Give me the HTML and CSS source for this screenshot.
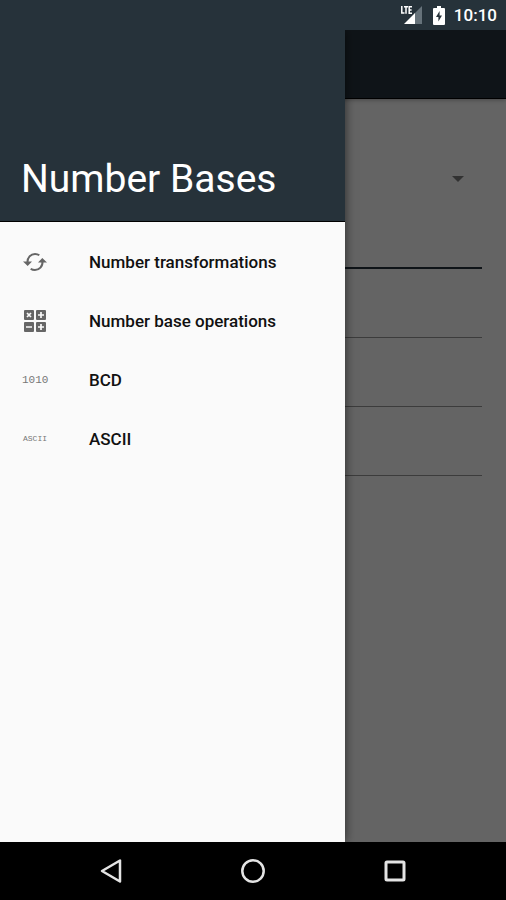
FILE: index.html
```html
<!DOCTYPE html>
<html lang="en">
<head>
<meta charset="utf-8">
<meta name="viewport" content="width=device-width, initial-scale=1">
<title>Number Bases</title>
<link rel="stylesheet" href="styles.css">
</head>
<body>
<div class="screen">
  <header class="status">
    <svg class="signal" width="22" height="20" viewBox="0 0 22 20" aria-hidden="true">
      <path fill="#66727a" d="M22 1v18H14V9z"/>
      <path fill="#fff" d="M15 8v11H4z"/>
      <path fill="none" stroke="#fff" stroke-width="1.5" d="M1.800 1v7h2.700M4 1.800h4M6 1.800v7M12 1.800H9.200v6.400H12M9 5h2.600"/>
    </svg>
    <svg class="battery" width="12" height="19" viewBox="0 0 12 19" aria-hidden="true">
      <path fill="#fff" d="M4 0h4v2h3a1 1 0 0 1 1 1v15a1 1 0 0 1-1 1H1a1 1 0 0 1-1-1V3a1 1 0 0 1 1-1h3z"/>
      <path fill="#26323a" d="M6.600 5v4.600H9L5.400 15.500v-4.500H3z"/>
    </svg>
    <time class="clock">10:10</time>
  </header>

  <div class="stage">
    <main class="page">
      <div class="appbar"></div>
      <form class="form">
        <div class="picker">
          <select class="base" aria-label="Base"><option></option></select>
          <svg class="caret" width="12" height="6" viewBox="0 0 12 6" aria-hidden="true"><path fill="#323232" d="M0 0h12L6 6z"/></svg>
        </div>
        <input class="field field-active" type="text" aria-label="First value">
        <input class="field" type="text" aria-label="Second value">
        <input class="field" type="text" aria-label="Third value">
        <input class="field" type="text" aria-label="Fourth value">
      </form>
    </main>

    <aside class="drawer">
      <div class="drawer-head"><h1 class="title">Number Bases</h1></div>
      <nav class="menu">
        <button class="item" type="button">
          <svg class="icon" width="26" height="24" viewBox="0 0 26 24" aria-hidden="true">
            <g fill="none" stroke="#666" stroke-width="2">
              <path d="M5.500 13C5 7.500 9 4 13 4c1.700 0 3.100.4 4.300 1.300"/>
              <path d="M20.500 11C21 16.500 17 20 13 20c-1.700 0-3.100-.4-4.300-1.300"/>
            </g>
            <path fill="#666" d="M1 11.500h9L5.700 16zM16 12.500h9L20.300 8z"/>
          </svg>
          <span>Number transformations</span>
        </button>
        <button class="item" type="button">
          <svg class="icon" width="26" height="24" viewBox="0 0 26 24" aria-hidden="true">
            <g fill="#666">
              <rect x="2" y="1" width="10" height="10" rx="1"/>
              <rect x="14" y="1" width="10" height="10" rx="1"/>
              <rect x="2" y="13" width="10" height="10" rx="1"/>
              <rect x="14" y="13" width="10" height="10" rx="1"/>
            </g>
            <path fill="none" stroke="#fafafa" stroke-width="1.700" d="M5 4l4 4M9 4L5 8M16 6h6M19 3v6M4 18h6M16 18h6M19 15v6"/>
          </svg>
          <span>Number base operations</span>
        </button>
        <button class="item" type="button">
          <span class="icon glyph" aria-hidden="true">1010</span>
          <span>BCD</span>
        </button>
        <button class="item" type="button">
          <span class="icon glyph glyph-small" aria-hidden="true">ASCII</span>
          <span>ASCII</span>
        </button>
      </nav>
    </aside>
  </div>

  <footer class="navbar">
    <button class="key" type="button" aria-label="Back">
      <svg width="26" height="26" viewBox="0 0 26 26"><path fill="none" stroke="#e4e4e4" stroke-width="2.500" stroke-linejoin="round" d="M22 2.500v21L4 13z"/></svg>
    </button>
    <button class="key" type="button" aria-label="Home">
      <svg width="26" height="26" viewBox="0 0 26 26"><circle cx="13" cy="13" r="10.700" fill="none" stroke="#e4e4e4" stroke-width="2.500"/></svg>
    </button>
    <button class="key" type="button" aria-label="Recent apps">
      <svg width="26" height="26" viewBox="0 0 26 26"><rect x="4" y="4" width="18" height="18" rx="1" fill="none" stroke="#e4e4e4" stroke-width="3"/></svg>
    </button>
  </footer>
</div>
</body>
</html>
```
FILE: styles.css
```css
* {
  box-sizing: border-box;
}

body {
  margin: 0;
  font-family: Roboto, "Liberation Sans", sans-serif;
}

button,
input,
select {
  margin: 0;
  padding: 0;
  border: 0;
  border-radius: 0;
  background: none;
  font: inherit;
}

.screen {
  display: flex;
  flex-direction: column;
  min-height: 100vh;
  background: #000;
}

.status {
  display: flex;
  align-items: center;
  justify-content: flex-end;
  height: 30px;
  padding-right: 9px;
  background: #26323a;
  color: #fff;
}

.battery {
  margin: 0 9px 0 11px;
}

.clock {
  font-size: 17px;
  font-weight: 500;
  line-height: 32px;
}

.stage {
  position: relative;
  display: flex;
  flex: 1;
  overflow: hidden;
}

.page {
  flex: 1;
  background: #646464;
}

.appbar {
  height: 69px;
  border-bottom: 1px solid #000;
  background: #0f1418;
  box-shadow: 0 1px 4px rgba(0, 0, 0, 0.3);
}

.form {
  display: flex;
  flex-direction: column;
  padding: 60px 24px 0;
}

.picker {
  display: grid;
  align-items: center;
  height: 40px;
}

.base,
.caret {
  grid-area: 1 / 1;
}

.base {
  width: 100%;
  height: 40px;
  appearance: none;
}

.caret {
  justify-self: end;
  margin-right: 18px;
  pointer-events: none;
}

.field {
  width: 100%;
  height: 40px;
  margin-top: 29px;
  border-bottom: 1px solid #3c3c3c;
  outline: 0;
}

.field-active {
  height: 41px;
  border-bottom: 2px solid #0f1418;
}

.drawer {
  position: absolute;
  top: 0;
  bottom: 0;
  left: 0;
  width: 68.2%;
  background: #fafafa;
  box-shadow: 0 0 10px rgba(0, 0, 0, 0.6);
}

.drawer-head {
  display: flex;
  align-items: flex-end;
  height: 192px;
  padding: 0 21px 18px;
  border-bottom: 1px solid #000;
  background: #26323a;
}

.title {
  margin: 0;
  color: #fff;
  font-size: 39px;
  font-weight: 400;
  line-height: 48px;
}

.menu {
  display: flex;
  flex-direction: column;
  padding-top: 10px;
}

.item {
  display: flex;
  align-items: center;
  gap: 41px;
  height: 59px;
  padding-left: 22px;
  color: #111;
  font-size: 17px;
  font-weight: 500;
  text-align: left;
}

.icon {
  flex: none;
  width: 26px;
}

.glyph {
  color: #777;
  font-family: "Liberation Mono", monospace;
  font-size: 11px;
  font-weight: 400;
  text-align: center;
}

.glyph-small {
  font-size: 8px;
}

.navbar {
  display: flex;
  justify-content: center;
  gap: 84px;
  height: 58px;
  background: #000;
}

.key {
  display: grid;
  place-items: center;
  width: 58px;
  height: 58px;
}
```
